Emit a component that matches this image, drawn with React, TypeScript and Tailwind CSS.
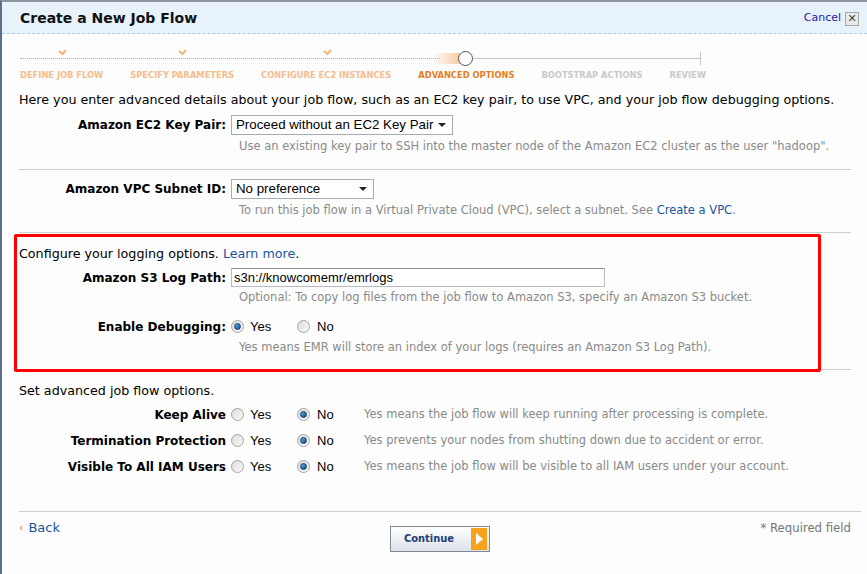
import React from "react";

const steps = [
  { label: "DEFINE JOB FLOW", state: "done" },
  { label: "SPECIFY PARAMETERS", state: "done" },
  { label: "CONFIGURE EC2 INSTANCES", state: "done" },
  { label: "ADVANCED OPTIONS", state: "current" },
  { label: "BOOTSTRAP ACTIONS", state: "todo" },
  { label: "REVIEW", state: "todo" },
];

function Radio({ on }: { on?: boolean }) {
  return (
    <span className="inline-flex shrink-0 w-[13px] h-[13px] rounded-full border border-[#a4a4a4] bg-gradient-to-br from-[#dcdcdc] to-[#fafafa] items-center justify-center">
      {on && <span className="w-[7px] h-[7px] rounded-full bg-gradient-to-br from-[#5ab0e8] to-[#0f4f86] border border-[#123c6a]" />}
    </span>
  );
}

function YesNo({ yes }: { yes: boolean }) {
  return (
    <div className="flex items-center font-['Liberation_Sans',sans-serif] text-[13px] text-black">
      <Radio on={yes} />
      <span className="ml-[6px] w-[47px]">Yes</span>
      <Radio on={!yes} />
      <span className="ml-[7px]">No</span>
    </div>
  );
}

function Label({ children }: { children: React.ReactNode }) {
  return <div className="w-[212px] shrink-0 text-right pr-[5px] font-bold text-[12px]">{children}</div>;
}

function Help({ children }: { children: React.ReactNode }) {
  return <div className="pl-[220px] text-[11.5px] text-[#8a8a8a]">{children}</div>;
}

function Select({ value, width }: { value: string; width: string }) {
  return (
    <div className={`${width} h-[20px] border border-[#a5acb5] bg-white flex items-center justify-between pl-[4px] pr-[6px] font-['Liberation_Sans',sans-serif] text-[13.3px]`}>
      <span>{value}</span>
      <svg width="8" height="5" viewBox="0 0 8 5"><path d="M0 0h8L4 4z" fill="#222" /></svg>
    </div>
  );
}

function Progress() {
  return (
    <div className="relative h-[42px] mx-[18px] mt-[10px]">
      <div className="absolute left-0 top-[14px] w-[420px] border-t border-dotted border-[#f0a05e]" />
      <div className="absolute left-[412px] top-[9px] w-[30px] h-[11px] rounded-l-full bg-gradient-to-r from-transparent to-[#f8c8a0]" />
      <div className="absolute left-[446px] top-[14px] w-[235px] border-t border-[#c4c4c4]" />
      <div className="absolute left-[680px] top-[8px] h-[13px] border-l border-[#c4c4c4]" />
      <div className="absolute left-[438px] top-[7px] w-[15px] h-[15px] rounded-full border-[1.5px] border-[#555] bg-white" />
      {[42, 162, 307].map((x) => (
        <svg key={x} className="absolute top-[5px]" style={{ left: x - 4 }} width="9" height="7" viewBox="0 0 9 7">
          <path d="M1 2l3.5 3L8 1" stroke="#f5b27a" strokeWidth="2" fill="none" />
        </svg>
      ))}
      <div className="absolute top-[24px] left-0 flex gap-[27px] font-['DejaVu_Sans_Condensed','DejaVu_Sans',sans-serif] font-bold text-[9.25px]">
        {steps.map((s) => (
          <span
            key={s.label}
            className={
              s.state === "done" ? "text-[#f5bc8c]" : s.state === "current" ? "text-[#e57e1f]" : "text-[#c9c9c9]"
            }
          >
            {s.label}
          </span>
        ))}
      </div>
    </div>
  );
}

export default function App() {
  return (
    <div className="w-[867px] h-[574px] overflow-hidden bg-[#fcfdfc] border-l-2 border-[#5d6f86] border-t-2 border-t-[#8e959d] font-['DejaVu_Sans',sans-serif] text-[12.7px] text-black flex flex-col">
      <div className="h-[32px] bg-[#e8f2fb] border-b border-dashed border-[#a9cde9] flex items-center justify-between pl-[18px] pr-[8px] pt-[2px]">
        <h1 className="text-[14px] font-bold text-[#111]">Create a New Job Flow</h1>
        <div className="flex items-center gap-[4px] text-[11px] text-[#1b1ba0]">
          Cancel
          <span className="w-[14px] h-[14px] border border-[#aaa] bg-[#eaeaea] flex items-center justify-center text-[11px] text-[#444] leading-none">✕</span>
        </div>
      </div>

      <Progress />

      <div className="pl-[17px] pr-[16px] flex flex-col">
        <p className="mt-[4px] h-[17px]">Here you enter advanced details about your job flow, such as an EC2 key pair, to use VPC, and your job flow debugging options.</p>
        <div className="flex items-center mt-[8px]">
          <Label>Amazon EC2 Key Pair:</Label>
          <Select value="Proceed without an EC2 Key Pair" width="w-[222px]" />
        </div>
        <div className="mt-[3px] h-[16px]"><Help>Use an existing key pair to SSH into the master node of the Amazon EC2 cluster as the user "hadoop".</Help></div>
        <div className="border-t border-[#cfcfcf] mt-[15px]" />

        <div className="flex items-center mt-[9px]">
          <Label>Amazon VPC Subnet ID:</Label>
          <Select value="No preference" width="w-[143px]" />
        </div>
        <div className="mt-[3px] h-[16px]">
          <Help>
            To run this job flow in a Virtual Private Cloud (VPC), select a subnet. See <span className="text-[#1a55a0]">Create a VPC</span>.
          </Help>
        </div>
        <div className="border-t border-[#cfcfcf] mt-[14px]" />

        <div className="relative flex flex-col pt-[11px]">
          <div className="absolute left-[-5px] top-[1px] w-[807px] h-[138px] border-[3px] border-[#ff0000] rounded-[2px]" />
          <p className="h-[17px]">
            Configure your logging options. <span className="text-[#1a55a0]">Learn more</span>.
          </p>
          <div className="flex items-center mt-[7px]">
            <Label>Amazon S3 Log Path:</Label>
            <div className="w-[374px] h-[19px] border border-[#b8bcc2] border-t-[#8c9097] bg-white flex items-center pl-[2px] font-['Liberation_Sans',sans-serif] text-[13px]">s3n://knowcomemr/emrlogs</div>
          </div>
          <div className="mt-[2px] h-[16px]"><Help>Optional: To copy log files from the job flow to Amazon S3, specify an Amazon S3 bucket.</Help></div>
          <div className="flex items-center mt-[13px] h-[17px]">
            <Label>Enable Debugging:</Label>
            <YesNo yes />
          </div>
          <div className="mt-[4px] h-[16px]"><Help>Yes means EMR will store an index of your logs (requires an Amazon S3 Log Path).</Help></div>
          <div className="border-t border-[#cfcfcf] mt-[14px]" />
        </div>

        <p className="mt-[11px] h-[17px]">Set advanced job flow options.</p>
        {[
          ["Keep Alive", "Yes means the job flow will keep running after processing is complete."],
          ["Termination Protection", "Yes prevents your nodes from shutting down due to accident or error."],
          ["Visible To All IAM Users", "Yes means the job flow will be visible to all IAM users under your account."],
        ].map(([l, h], i) => (
          <div key={l} className={"flex items-center h-[17px] " + (i === 0 ? "mt-[8px]" : "mt-[9px]")}>
            <Label>{l}</Label>
            <div className="w-[133px] shrink-0"><YesNo yes={false} /></div>
            <div className="text-[11.5px] text-[#8a8a8a]">{h}</div>
          </div>
        ))}

        <div className="border-t border-[#cfcfcf] mt-[36px] mr-[-10px]" />
        <div className="flex mt-[6px] items-start">
          <div className="w-[371px] shrink-0 text-[13px] text-[#1a55a0] flex items-center gap-[5px]">
            <span className="text-[#e8801e] text-[11px]">‹</span>Back
          </div>
          <div className="mt-[8px] w-[100px] h-[26px] border border-[#7f8790] bg-gradient-to-b from-white to-[#dde2e8] flex items-center justify-between pl-[13px] pr-[2px]">
            <span className="font-bold text-[11px] text-[#1b3f7a] font-['DejaVu_Sans_Condensed','DejaVu_Sans',sans-serif]">Continue</span>
            <span className="w-[16px] h-[22px] bg-[#f7a21b] flex items-center justify-center">
              <svg width="7" height="12" viewBox="0 0 7 12"><path d="M0 0l7 6-7 6z" fill="#fff" /></svg>
            </span>
          </div>
          <div className="flex-1 text-right text-[13px] text-[#777] font-['DejaVu_Sans_Condensed','DejaVu_Sans',sans-serif]">* Required field</div>
        </div>
      </div>
    </div>
  );
}
